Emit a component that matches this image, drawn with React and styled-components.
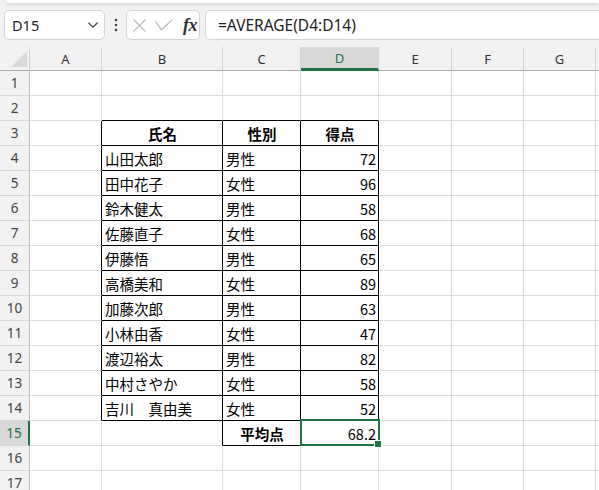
import React from 'react';
import styled, { createGlobalStyle } from 'styled-components';

const GREEN = '#217346';
const GRID = '#dcdcdc';
const PANEL = '#f2f2f2';
const COLS = '30px 72px 121px 78px 78px 73px 72px 72px 72px';

const GlobalStyle = createGlobalStyle`
  html, body { margin: 0; padding: 0; background: #fff; overflow: hidden; }
  body { font-family: "Noto Sans", "Noto Sans CJK JP", sans-serif; }
`;

const Window = styled.div`
  width: 599px;
  height: 490px;
  overflow: hidden;
  background: #fff;
  display: flex;
  flex-direction: column;
`;

const TopStrip = styled.div`
  height: 10px;
  flex: none;
  background: ${PANEL};
  padding-left: 6px;
`;

const RibbonEdge = styled.div`
  height: 3px;
  background: #fff;
  border-radius: 0 0 0 7px;
  box-shadow: 0 1px 4px rgba(0, 0, 0, 0.18);
`;

const FormulaBar = styled.div`
  height: 30px;
  flex: none;
  display: flex;
  align-items: stretch;
  background: ${PANEL};
  padding-left: 4px;
  overflow: hidden;
`;

const Box = styled.div`
  flex: none;
  box-sizing: border-box;
  border: 1px solid #d4d4d4;
  border-radius: 5px;
  background: #fff;
  display: flex;
  align-items: center;
`;

const NameBox = styled(Box)`
  width: 101px;
  justify-content: space-between;
  padding: 0 5px 0 7px;
  font-size: 14.5px;
  color: #222;
`;

const Dots = styled.div`
  flex: none;
  width: 21px;
  display: flex;
  align-items: center;
  justify-content: center;
`;

const FxBox = styled(Box)`
  width: 74px;
  padding-left: 6px;
  gap: 9px;
`;

const FxLabel = styled.span`
  font-family: "Liberation Serif", "DejaVu Serif", serif;
  font-style: italic;
  font-weight: 700;
  font-size: 18px;
  color: #333;
  margin-left: 1px;
  letter-spacing: -0.5px;
`;

const FormulaInput = styled(Box)`
  width: 420px;
  margin-left: 5px;
  padding-left: 12px;
  font-size: 15.5px;
  color: #222;
`;

const ColumnHeaderRow = styled.div`
  flex: none;
  height: 31px;
  box-sizing: border-box;
  padding-top: 7px;
  background: ${PANEL};
  display: grid;
  grid-template-columns: ${COLS};
`;

const Corner = styled.div`
  position: relative;
  border-right: 1px solid #cfcfcf;
  border-bottom: 1px solid #ababab;
  &::after {
    content: "";
    position: absolute;
    left: 11px;
    top: 4px;
    width: 16px;
    height: 16px;
    background: #d9d9d9;
    clip-path: polygon(100% 0, 100% 100%, 0 100%);
  }
`;

const ColumnHeader = styled.div`
  box-sizing: border-box;
  display: flex;
  align-items: center;
  justify-content: center;
  font-size: 13px;
  padding-top: ${p => (p.$active ? '1px' : '0')};
  color: ${p => (p.$active ? GREEN : '#333')};
  background: ${p => (p.$active ? '#d9d9d9' : PANEL)};
  border-right: 1px solid #d4d4d4;
  border-bottom: ${p => (p.$active ? `3px solid ${GREEN}` : '1px solid #ababab')};
`;

const Sheet = styled.div`
  display: grid;
  grid-template-columns: ${COLS};
  grid-auto-rows: 25px;
`;

const RowHeader = styled.div`
  box-sizing: border-box;
  display: flex;
  align-items: center;
  justify-content: center;
  font-size: 13.5px;
  color: ${p => (p.$active ? GREEN : '#444')};
  background: ${p => (p.$active ? '#d9d9d9' : PANEL)};
  border-right: ${p => (p.$active ? `2px solid ${GREEN}` : '1px solid #bdbdbd')};
  border-bottom: 1px solid #d6d6d6;
`;

const Cell = styled.div`
  position: relative;
  box-sizing: border-box;
  display: flex;
  align-items: center;
  justify-content: ${p => p.$align};
  padding: 0 2px 0 3px;
  font-family: "Noto Sans CJK JP", sans-serif;
  font-size: 14.5px;
  font-weight: ${p => (p.$bold ? 700 : 400)};
  color: #000;
  white-space: pre;
  border-right: 1px solid ${p => (p.$inkRight ? '#000' : GRID)};
  border-bottom: 1px solid ${p => (p.$inkBottom ? '#000' : GRID)};
  z-index: ${p => (p.$selected ? 2 : 'auto')};
`;

const Selection = styled.div`
  position: absolute;
  top: -2px;
  left: -1px;
  right: -2px;
  bottom: -1px;
  border: 2px solid ${GREEN};
  pointer-events: none;
`;

const FillHandle = styled.div`
  position: absolute;
  right: -4px;
  bottom: -4px;
  width: 6px;
  height: 6px;
  background: ${GREEN};
  border: 1px solid #fff;
`;

const COLUMN_KEYS = ['A', 'B', 'C', 'D', 'E', 'F', 'G', 'H'];

const people = [
  ['山田太郎', '男性', '72'],
  ['田中花子', '女性', '96'],
  ['鈴木健太', '男性', '58'],
  ['佐藤直子', '女性', '68'],
  ['伊藤悟', '男性', '65'],
  ['高橋美和', '女性', '89'],
  ['加藤次郎', '男性', '63'],
  ['小林由香', '女性', '47'],
  ['渡辺裕太', '男性', '82'],
  ['中村さやか', '女性', '58'],
  ['吉川　真由美', '女性', '52'],
];

const data = {
  3: { B: { v: '氏名', bold: true, align: 'center' }, C: { v: '性別', bold: true, align: 'center' }, D: { v: '得点', bold: true, align: 'center' } },
  15: { C: { v: '平均点', bold: true, align: 'center' }, D: { v: '68.2', align: 'flex-end' } },
};
people.forEach(([name, sex, score], i) => {
  data[4 + i] = {
    B: { v: name, align: 'flex-start' },
    C: { v: sex, align: 'flex-start' },
    D: { v: score, align: 'flex-end' },
  };
});

const inTable = (r, c) => {
  if (r >= 3 && r <= 14 && c >= 1 && c <= 3) return true;
  if (r === 15 && c >= 2 && c <= 3) return true;
  return false;
};

const ACTIVE_ROW = 15;
const ACTIVE_COL = 3;
const ROWS = Array.from({ length: 17 }, (_, i) => i + 1);
// the last column's letter sits beyond the window's right edge
const VISIBLE_LABELS = 7;

const ChevronDown = () => (
  <svg width="12" height="8" viewBox="0 0 12 8">
    <path d="M1.5 1.8 L6 6.2 L10.5 1.8" fill="none" stroke="#444" strokeWidth="1.3" />
  </svg>
);

const VerticalDots = () => (
  <svg width="4" height="14" viewBox="0 0 4 14">
    <circle cx="2" cy="2" r="1.3" fill="#444" />
    <circle cx="2" cy="7" r="1.3" fill="#444" />
    <circle cx="2" cy="12" r="1.3" fill="#444" />
  </svg>
);

const CancelIcon = () => (
  <svg width="13" height="13" viewBox="0 0 13 13">
    <path d="M0.5 0.5 L12.5 12.5 M12.5 0.5 L0.5 12.5" stroke="#b9b9b9" strokeWidth="1.2" fill="none" />
  </svg>
);

const EnterIcon = () => (
  <svg width="18" height="12" viewBox="0 0 18 12">
    <path d="M0.6 2.4 L6.4 10.8 L17.4 0.6" stroke="#b9b9b9" strokeWidth="1.2" fill="none" />
  </svg>
);

export default function App() {
  return (
    <Window>
      <GlobalStyle />
      <TopStrip>
        <RibbonEdge />
      </TopStrip>
      <FormulaBar>
        <NameBox>
          <span>D15</span>
          <ChevronDown />
        </NameBox>
        <Dots>
          <VerticalDots />
        </Dots>
        <FxBox>
          <CancelIcon />
          <EnterIcon />
          <FxLabel>fx</FxLabel>
        </FxBox>
        <FormulaInput>=AVERAGE(D4:D14)</FormulaInput>
      </FormulaBar>
      <ColumnHeaderRow>
        <Corner />
        {COLUMN_KEYS.map((k, i) => (
          <ColumnHeader key={k} $active={i === ACTIVE_COL}>
            {i < VISIBLE_LABELS ? k : ''}
          </ColumnHeader>
        ))}
      </ColumnHeaderRow>
      <Sheet>
        {ROWS.map(r => (
          <React.Fragment key={r}>
            <RowHeader $active={r === ACTIVE_ROW}>{r}</RowHeader>
            {COLUMN_KEYS.map((k, c) => {
              const cell = (data[r] && data[r][k]) || null;
              const selected = r === ACTIVE_ROW && c === ACTIVE_COL;
              return (
                <Cell
                  key={k}
                  $align={cell ? cell.align : 'flex-start'}
                  $bold={cell && cell.bold}
                  $inkRight={inTable(r, c) || inTable(r, c + 1)}
                  $inkBottom={inTable(r, c) || inTable(r + 1, c)}
                  $selected={selected}
                >
                  {cell ? cell.v : ''}
                  {selected && (
                    <Selection>
                      <FillHandle />
                    </Selection>
                  )}
                </Cell>
              );
            })}
          </React.Fragment>
        ))}
      </Sheet>
    </Window>
  );
}
